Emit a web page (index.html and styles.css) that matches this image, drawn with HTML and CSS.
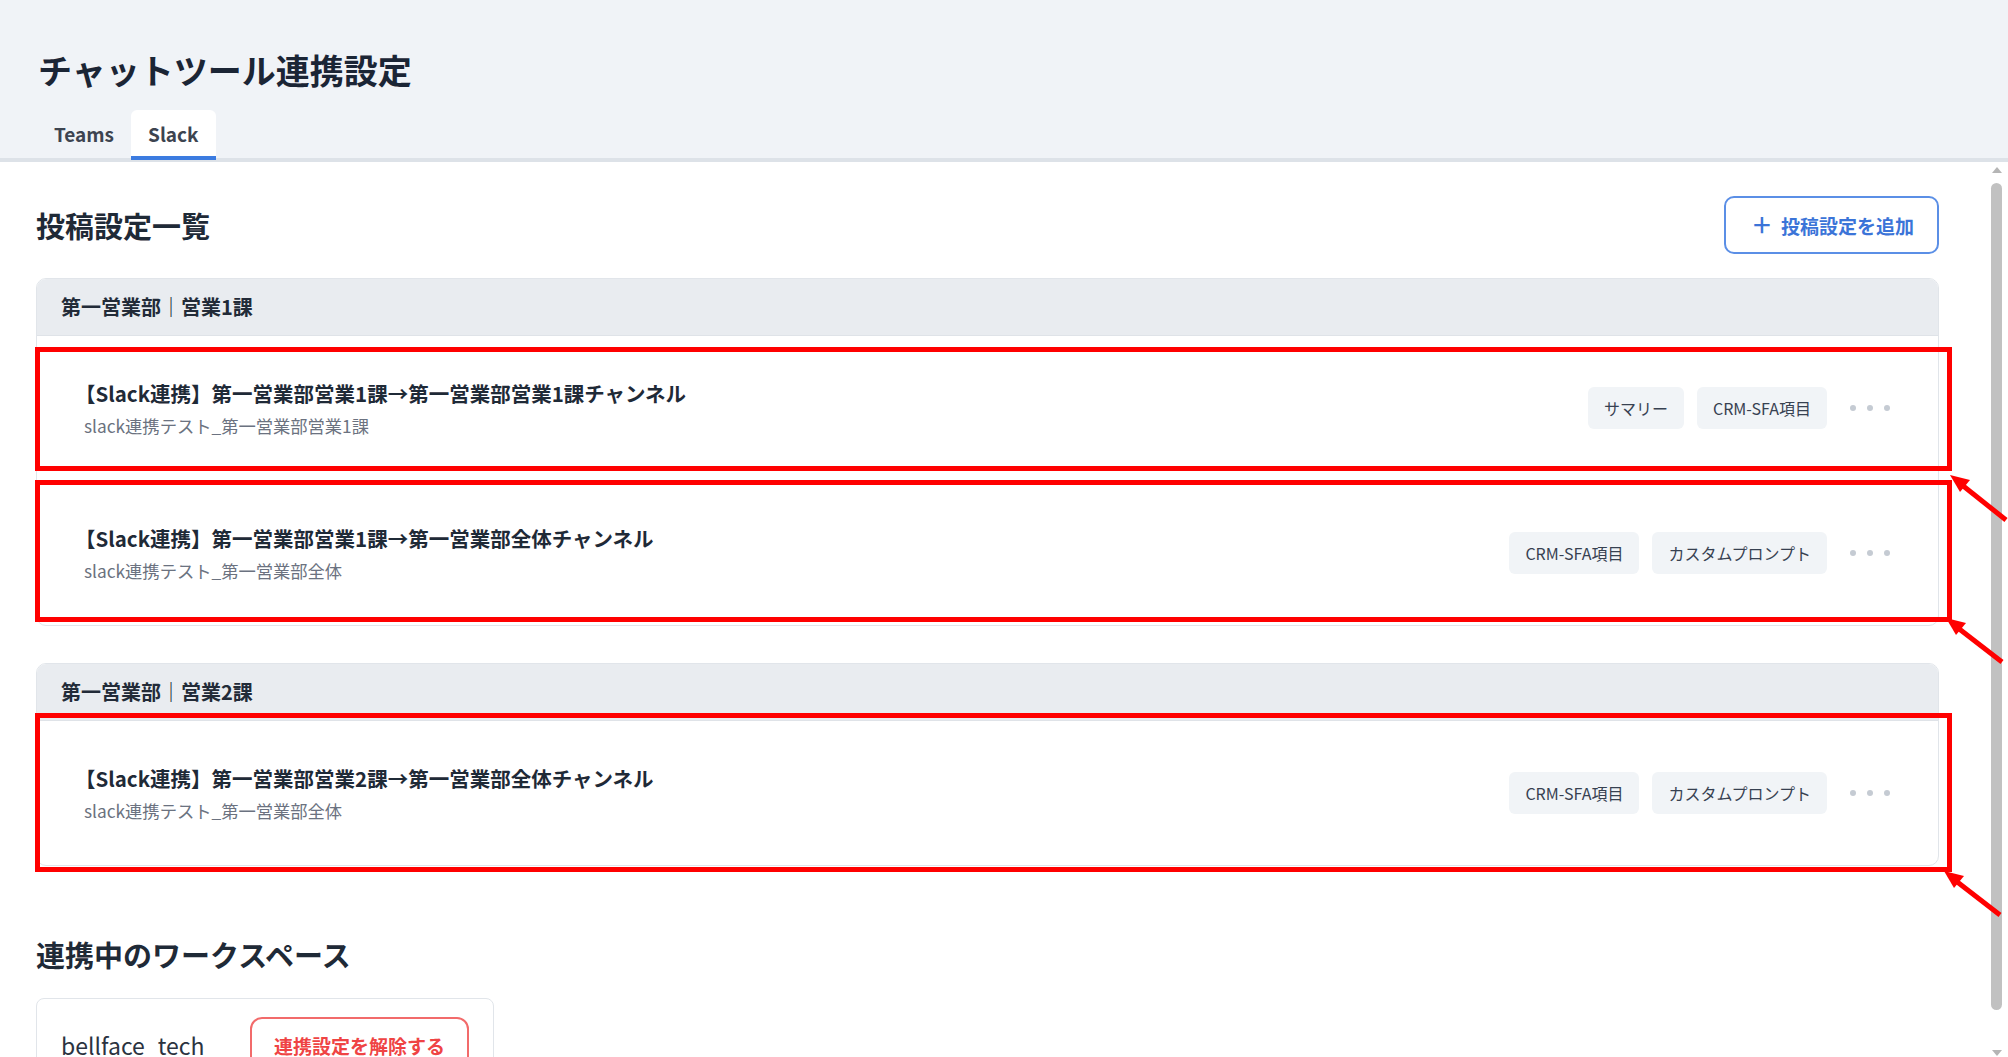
FILE: index.html
```html
<!DOCTYPE html>
<html lang="ja">
<head>
    <meta charset="UTF-8">
    <meta name="viewport" content="width=device-width, initial-scale=1.0">
    <title>チャットツール連携設定</title>
    <link rel="stylesheet" href="styles.css">
</head>
<body>
    <header class="page-header">
        <h1>チャットツール連携設定</h1>
        <nav class="tabs">
            <div class="tab">Teams</div>
            <div class="tab active">Slack</div>
        </nav>
    </header>

    <div class="layout">
        <main class="content">
            <div class="section-head">
                <h2>投稿設定一覧</h2>
                <button class="btn-add"><span class="plus">+</span>投稿設定を追加</button>
            </div>

            <div class="group">
                <div class="group-head">第一営業部｜営業1課</div>
                <div class="row">
                    <div class="row-text">
                        <div class="row-title">【Slack連携】第一営業部営業1課→第一営業部営業1課チャンネル</div>
                        <div class="row-sub">slack連携テスト_第一営業部営業1課</div>
                    </div>
                    <div class="row-tags">
                        <span class="tag">サマリー</span>
                        <span class="tag">CRM-SFA項目</span>
                        <span class="more"><i></i><i></i><i></i></span>
                    </div>
                </div>
                <div class="row">
                    <div class="row-text">
                        <div class="row-title">【Slack連携】第一営業部営業1課→第一営業部全体チャンネル</div>
                        <div class="row-sub">slack連携テスト_第一営業部全体</div>
                    </div>
                    <div class="row-tags">
                        <span class="tag">CRM-SFA項目</span>
                        <span class="tag">カスタムプロンプト</span>
                        <span class="more"><i></i><i></i><i></i></span>
                    </div>
                </div>
            </div>

            <div class="group">
                <div class="group-head">第一営業部｜営業2課</div>
                <div class="row">
                    <div class="row-text">
                        <div class="row-title">【Slack連携】第一営業部営業2課→第一営業部全体チャンネル</div>
                        <div class="row-sub">slack連携テスト_第一営業部全体</div>
                    </div>
                    <div class="row-tags">
                        <span class="tag">CRM-SFA項目</span>
                        <span class="tag">カスタムプロンプト</span>
                        <span class="more"><i></i><i></i><i></i></span>
                    </div>
                </div>
            </div>

            <h2 class="ws-title">連携中のワークスペース</h2>
            <div class="ws-card">
                <span class="ws-name">bellface_tech</span>
                <button class="btn-remove">連携設定を解除する</button>
            </div>
        </main>

        <div class="scrollbar">
            <span class="arrow up"></span>
            <span class="thumb"></span>
            <span class="arrow down"></span>
        </div>
    </div>

    <!-- annotation marks drawn over the screenshot -->
    <div class="mark mark-1"></div>
    <div class="mark mark-2"></div>
    <div class="mark mark-3"></div>
    <svg class="arrows" width="2008" height="1057" viewBox="0 0 2008 1057">
        <g stroke="#ff0000" stroke-width="5" fill="#ff0000">
            <line x1="2006" y1="520" x2="1962" y2="485"/>
            <polygon points="1950,475 1970,480 1960,492" stroke="none"/>
            <line x1="2002" y1="662" x2="1958" y2="628"/>
            <polygon points="1946,618 1966,623 1956,635" stroke="none"/>
            <line x1="2000" y1="915" x2="1956" y2="881"/>
            <polygon points="1944,871 1964,876 1954,888" stroke="none"/>
        </g>
    </svg>
</body>
</html>
```

FILE: styles.css
```css
body {
    margin: 0;
    font-family: "Noto Sans CJK JP", "Noto Sans", sans-serif;
    color: #1f2a37;
    background: #ffffff;
    height: 1057px;
    overflow: hidden;
    position: relative;
}

.page-header {
    background: #f0f3f7;
    padding: 47px 0 0 38px;
    border-bottom: 4px solid #dde2e8;
}

.page-header h1 {
    margin: 0;
    font-size: 34px;
    line-height: 45px;
    font-weight: 700;
    color: #1b2535;
}

.tabs {
    display: flex;
    margin-top: 18px;
    margin-left: -1px;
}

.tab {
    padding: 0 17px;
    height: 48px;
    line-height: 48px;
    font-size: 19px;
    font-weight: 700;
    color: #3d4450;
}

.tab.active {
    background: #ffffff;
    border-radius: 6px 6px 0 0;
    box-shadow: inset 0 -4px 0 #3b7be0;
    height: 50px;
    margin-bottom: -2px;
}

.layout {
    display: flex;
}

.content {
    flex: 1;
    padding: 34px 45px 0 36px;
}

.section-head {
    display: flex;
    align-items: center;
    justify-content: space-between;
    height: 58px;
}

h2 {
    margin: 0;
    font-size: 29px;
    font-weight: 700;
    color: #1f2a37;
    line-height: 40px;
}

.btn-add {
    height: 58px;
    width: 215px;
    border: 2px solid #5b8fe6;
    border-radius: 10px;
    background: #ffffff;
    color: #3b74d8;
    font-family: inherit;
    font-size: 19px;
    font-weight: 700;
    display: flex;
    align-items: center;
    justify-content: center;
    gap: 10px;
    padding: 0 0 0 4px;
}

.btn-add .plus {
    font-size: 32px;
    font-weight: 400;
    line-height: 1;
    margin-top: -4px;
}

.group {
    margin-top: 24px;
    border: 1px solid #e1e5ea;
    border-radius: 10px;
    overflow: hidden;
}

.group + .group {
    margin-top: 37px;
}

.group-head {
    background: #e9ecf0;
    height: 56px;
    line-height: 56px;
    padding: 0 24px;
    font-size: 20px;
    font-weight: 700;
    color: #222b38;
    border-bottom: 1px solid #dfe3e8;
}

.row {
    display: flex;
    align-items: center;
    justify-content: space-between;
    min-height: 144px;
    padding: 0 40px 0 38px;
}

.row + .row {
    border-top: 1px solid #e5e8ec;
}

.row-title {
    font-size: 20.5px;
    font-weight: 700;
    line-height: 30px;
    color: #1f2a37;
}

.row-sub {
    font-size: 17.3px;
    line-height: 26px;
    margin-top: 5px;
    color: #6b7280;
    padding-left: 9px;
}

.row-tags {
    display: flex;
    align-items: center;
    gap: 13px;
}

.tag {
    background: #f1f4f7;
    border-radius: 6px;
    height: 42px;
    line-height: 42px;
    padding: 0 16px;
    font-size: 16px;
    color: #374151;
}

.more {
    display: flex;
    gap: 11px;
    padding: 0 8px 0 10px;
}

.more i {
    width: 6px;
    height: 6px;
    border-radius: 50%;
    background: #c5cbd3;
}

.ws-title {
    margin-top: 68px;
}

.ws-card {
    margin-top: 24px;
    width: 458px;
    box-sizing: border-box;
    border: 1px solid #e1e5ea;
    border-radius: 8px;
    padding: 18px 24px;
    display: flex;
    align-items: center;
    justify-content: space-between;
}

.ws-name {
    font-size: 23px;
    color: #2b3340;
}

.btn-remove {
    height: 56px;
    padding: 0 22px;
    border: 2px solid #f26b6b;
    border-radius: 12px;
    background: #ffffff;
    color: #ef4444;
    font-family: inherit;
    font-size: 19px;
    font-weight: 700;
}

.scrollbar {
    width: 24px;
    height: 895px;
    position: relative;
    display: flex;
    flex-direction: column;
    align-items: center;
}

.scrollbar .thumb {
    width: 11px;
    height: 827px;
    margin-top: 4px;
    border-radius: 6px;
    background: #c1c1c1;
}

.arrow {
    width: 0;
    height: 0;
    border-left: 5px solid transparent;
    border-right: 5px solid transparent;
    margin-left: 1px;
}

.arrow.up {
    border-bottom: 6px solid #b5b5b5;
    margin-top: 5px;
    margin-bottom: 6px;
}

.arrow.down {
    border-top: 6px solid #b5b5b5;
    margin-top: 40px;
}

.mark {
    position: absolute;
    left: 35px;
    width: 1917px;
    box-sizing: border-box;
    border: 5px solid #ff0000;
}

.mark-1 {
    top: 347px;
    height: 124px;
}

.mark-2 {
    top: 480px;
    height: 142px;
}

.mark-3 {
    top: 713px;
    height: 159px;
}

.arrows {
    position: absolute;
    left: 0;
    top: 0;
    pointer-events: none;
}
```
